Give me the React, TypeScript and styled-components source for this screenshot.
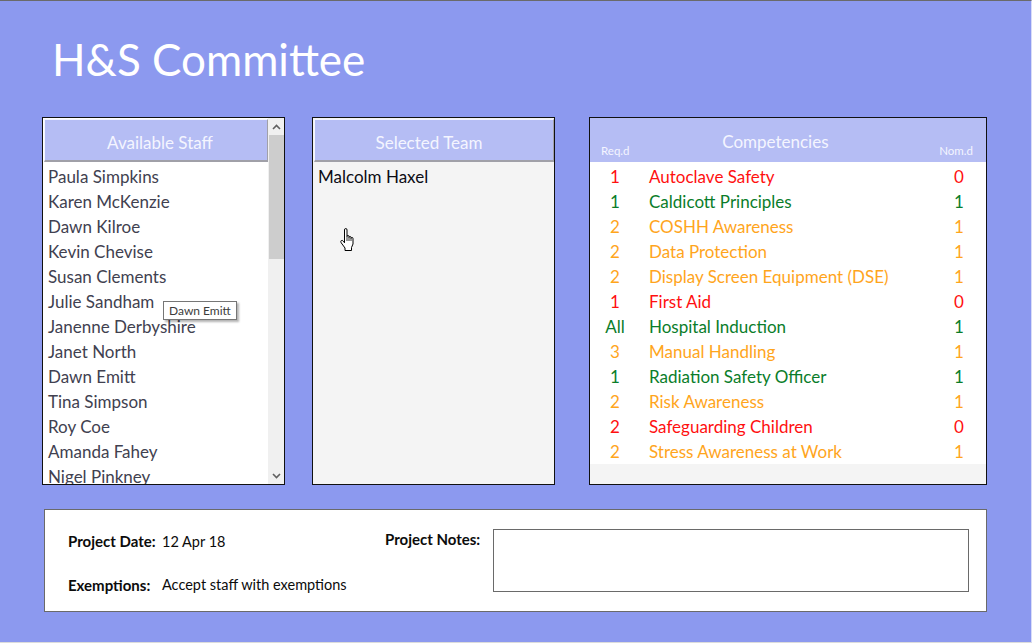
import { FunctionComponent } from "react";
import styled, { createGlobalStyle } from "styled-components";

const GlobalStyle = createGlobalStyle`
  html, body {
    margin: 0;
    padding: 0;
    background: #8c99ef;
  }
  body {
    font-family: Lato, "Open Sans", sans-serif;
  }
`;

const staff = [
  "Paula Simpkins",
  "Karen McKenzie",
  "Dawn Kilroe",
  "Kevin Chevise",
  "Susan Clements",
  "Julie Sandham",
  "Janenne Derbyshire",
  "Janet North",
  "Dawn Emitt",
  "Tina Simpson",
  "Roy Coe",
  "Amanda Fahey",
  "Nigel Pinkney",
];

type Level = "red" | "green" | "amber";

const competencies: { req: string; name: string; nom: string; level: Level }[] = [
  { req: "1", name: "Autoclave Safety", nom: "0", level: "red" },
  { req: "1", name: "Caldicott Principles", nom: "1", level: "green" },
  { req: "2", name: "COSHH Awareness", nom: "1", level: "amber" },
  { req: "2", name: "Data Protection", nom: "1", level: "amber" },
  { req: "2", name: "Display Screen Equipment (DSE)", nom: "1", level: "amber" },
  { req: "1", name: "First Aid", nom: "0", level: "red" },
  { req: "All", name: "Hospital Induction", nom: "1", level: "green" },
  { req: "3", name: "Manual Handling", nom: "1", level: "amber" },
  { req: "1", name: "Radiation Safety Officer", nom: "1", level: "green" },
  { req: "2", name: "Risk Awareness", nom: "1", level: "amber" },
  { req: "2", name: "Safeguarding Children", nom: "0", level: "red" },
  { req: "2", name: "Stress Awareness at Work", nom: "1", level: "amber" },
];

const levelColor: Record<Level, string> = {
  red: "#ff1010",
  green: "#0a7d2a",
  amber: "#ffa51c",
};

const Page = styled.div`
  width: 1032px;
  height: 643px;
  box-sizing: border-box;
  border-top: 1px solid #6a6a6a;
  border-bottom: 1px solid #dcdcdc;
  border-right: 1px solid #d8dcf8;
  background: #8c99ef;
  padding: 30px 0 0 42px;
  display: flex;
  flex-direction: column;
  overflow: hidden;
`;

const Title = styled.h1`
  margin: 0 0 30px 10px;
  font-family: Lato, "Open Sans", sans-serif;
  font-weight: 400;
  font-size: 44px;
  line-height: 56px;
  height: 56px;
  color: #ffffff;
`;

const PanelRow = styled.div`
  display: flex;
  flex-direction: row;
  align-items: flex-start;
`;

const Panel = styled.div<{ $width: number; $gap?: number; $bg?: string }>`
  width: ${(p) => p.$width}px;
  height: 368px;
  margin-left: ${(p) => p.$gap ?? 0}px;
  box-sizing: border-box;
  border: 1px solid #111;
  background: ${(p) => p.$bg ?? "#ffffff"};
  display: flex;
  flex-direction: row;
  overflow: hidden;
  position: relative;
`;

const Column = styled.div`
  flex: 1;
  display: flex;
  flex-direction: column;
  min-width: 0;
`;

const BevelHeader = styled.div<{ $shift?: number }>`
  height: 43px;
  flex-shrink: 0;
  margin: 1px 0 0 1px;
  box-sizing: border-box;
  background: #b5bdf4;
  border-top: 1px solid #f4f6ff;
  border-left: 1px solid #f4f6ff;
  border-bottom: 2px solid #a0a0a8;
  border-right: 1px solid #a0a0a8;
  display: flex;
  align-items: center;
  justify-content: center;
  color: #f4f5ff;
  font-size: 17px;
  padding-top: 5px;
  padding-left: ${(p) => Math.max(0, (p.$shift ?? 0) * 2)}px;
  padding-right: ${(p) => Math.max(0, -(p.$shift ?? 0) * 2)}px;
`;

const NameList = styled.div`
  flex-shrink: 0;
  padding: 2px 0 0 5px;
  display: flex;
  flex-direction: column;
`;

const NameRow = styled.div<{ $dark?: boolean }>`
  height: 25px;
  line-height: 25px;
  font-size: 17px;
  color: ${(p) => (p.$dark ? "#0c0c14" : "#414150")};
  white-space: nowrap;
`;

const ScrollTrack = styled.div`
  width: 16px;
  flex-shrink: 0;
  background: #f0f0f0;
  display: flex;
  flex-direction: column;
  align-items: center;
`;

const ScrollButton = styled.div`
  height: 17px;
  width: 16px;
  display: flex;
  align-items: center;
  justify-content: center;
`;

const ScrollThumb = styled.div`
  width: 15px;
  height: 124px;
  background: #cdcdcd;
`;

const ScrollSpace = styled.div`
  flex: 1;
`;

const Tooltip = styled.div`
  position: absolute;
  left: 120px;
  top: 183px;
  height: 19px;
  box-sizing: border-box;
  padding: 0 5px;
  border: 1px solid #767676;
  background: #ffffff;
  box-shadow: 2px 2px 2px rgba(0, 0, 0, 0.3);
  font-size: 12px;
  line-height: 17px;
  color: #3c3c3c;
  white-space: nowrap;
`;

const Cursor = styled.svg`
  position: absolute;
  left: 26px;
  top: 110px;
`;

const CompHeader = styled.div`
  height: 44px;
  flex-shrink: 0;
  background: #b5bdf4;
  display: grid;
  grid-template-columns: auto 1fr auto;
  padding: 0 13px 0 11px;
  color: #f4f5ff;
`;

const SmallCaption = styled.div`
  font-size: 11.5px;
  align-self: end;
  padding-bottom: 5px;
`;

const CompTitle = styled.div`
  font-size: 17px;
  align-self: center;
  text-align: center;
  padding: 2px 18px 0 0;
`;

const CompList = styled.div`
  flex-shrink: 0;
  background: #ffffff;
  display: flex;
  flex-direction: column;
  padding-top: 2px;
`;

const CompRow = styled.div<{ $level: Level }>`
  height: 25px;
  line-height: 25px;
  display: grid;
  grid-template-columns: 50px 1fr 40px;
  column-gap: 9px;
  padding-right: 7px;
  font-size: 17px;
  color: ${(p) => levelColor[p.$level]};
  white-space: nowrap;
`;

const Centered = styled.div`
  text-align: center;
`;

const CompFill = styled.div`
  flex: 1;
  background: #f4f4f4;
`;

const Footer = styled.div`
  margin: 24px 0 0 2px;
  width: 943px;
  height: 103px;
  box-sizing: border-box;
  background: #ffffff;
  border: 1px solid #6a6a6a;
  padding: 19px 17px 0 23px;
  display: flex;
  flex-direction: row;
  align-items: flex-start;
  font-size: 14.5px;
  color: #0c0c0c;
`;

const FieldGroup = styled.div`
  width: 317px;
  display: flex;
  flex-direction: column;
  gap: 25px;
  padding-top: 3px;
`;

const Field = styled.div`
  display: flex;
  flex-direction: row;
  line-height: 18px;
`;

const Label = styled.div<{ $width?: number }>`
  font-weight: 700;
  font-size: 15px;
  width: ${(p) => (p.$width ? `${p.$width}px` : "auto")};
  flex-shrink: 0;
`;

const Value = styled.div<{ $offset?: number }>`
  padding-top: ${(p) => p.$offset ?? 0}px;
`;

const NotesLabel = styled.div`
  width: 108px;
  font-weight: 700;
  font-size: 15px;
  line-height: 18px;
  padding-top: 1px;
`;

const NotesBox = styled.div`
  flex: 1;
  height: 63px;
  box-sizing: border-box;
  border: 1px solid #6a6a6a;
  background: #ffffff;
`;

const Chevron: FunctionComponent<{ up?: boolean }> = ({ up }) => (
  <svg width="9" height="6" viewBox="0 0 9 6">
    <path
      d={up ? "M1 5 L4.5 1.5 L8 5" : "M1 1 L4.5 4.5 L8 1"}
      fill="none"
      stroke="#606060"
      strokeWidth="1.6"
    />
  </svg>
);

const HandCursor: FunctionComponent = () => (
  <Cursor width="18" height="24" viewBox="0 0 18 24">
    <path
      d="M5.5 2 Q5.5 0.5 6.75 0.5 Q8 0.5 8 2 V8.5 Q8 7.5 9 7.5 Q10 7.5 10 8.5 V9.5 Q10 8.5 11 8.5 Q12 8.5 12 9.5 V10.5 Q12 9.5 13 9.5 Q14 9.5 14 10.5 V16 L12.5 19.5 V22.5 H6 V20 L2.2 14.8 Q1.3 13.4 2.3 12.6 Q3.3 12 4.3 13.2 L5.5 14.8 Z"
      fill="#ffffff"
      stroke="#000000"
      strokeWidth="1"
      strokeLinejoin="round"
    />
    <path d="M8 8.5 V13 M10 9.5 V13 M12 10.5 V13" stroke="#000" strokeWidth="0.8" />
  </Cursor>
);

const App: FunctionComponent = () => {
  return (
    <>
      <GlobalStyle />
      <Page>
        <Title>H&amp;S Committee</Title>
        <PanelRow>
          <Panel $width={243}>
            <Column>
              <BevelHeader $shift={4}>Available Staff</BevelHeader>
              <NameList>
                {staff.map((name) => (
                  <NameRow key={name}>{name}</NameRow>
                ))}
              </NameList>
            </Column>
            <ScrollTrack>
              <ScrollButton>
                <Chevron up />
              </ScrollButton>
              <ScrollThumb />
              <ScrollSpace />
              <ScrollButton>
                <Chevron />
              </ScrollButton>
            </ScrollTrack>
            <Tooltip>Dawn Emitt</Tooltip>
          </Panel>
          <Panel $width={243} $gap={27} $bg="#f4f4f4">
            <Column>
              <BevelHeader $shift={-5}>Selected Team</BevelHeader>
              <NameList>
                <NameRow $dark>Malcolm Haxel</NameRow>
              </NameList>
            </Column>
            <HandCursor />
          </Panel>
          <Panel $width={398} $gap={34} $bg="#f4f4f4">
            <Column>
              <CompHeader>
                <SmallCaption>Req.d</SmallCaption>
                <CompTitle>Competencies</CompTitle>
                <SmallCaption>Nom.d</SmallCaption>
              </CompHeader>
              <CompList>
                {competencies.map((c) => (
                  <CompRow key={c.name} $level={c.level}>
                    <Centered>{c.req}</Centered>
                    <div>{c.name}</div>
                    <Centered>{c.nom}</Centered>
                  </CompRow>
                ))}
              </CompList>
              <CompFill />
            </Column>
          </Panel>
        </PanelRow>
        <Footer>
          <FieldGroup>
            <Field>
              <Label $width={94}>Project Date:</Label>
              <Value $offset={1}>12 Apr 18</Value>
            </Field>
            <Field>
              <Label $width={94}>Exemptions:</Label>
              <Value>Accept staff with exemptions</Value>
            </Field>
          </FieldGroup>
          <NotesLabel>Project Notes:</NotesLabel>
          <NotesBox />
        </Footer>
      </Page>
    </>
  );
};

export default App;
